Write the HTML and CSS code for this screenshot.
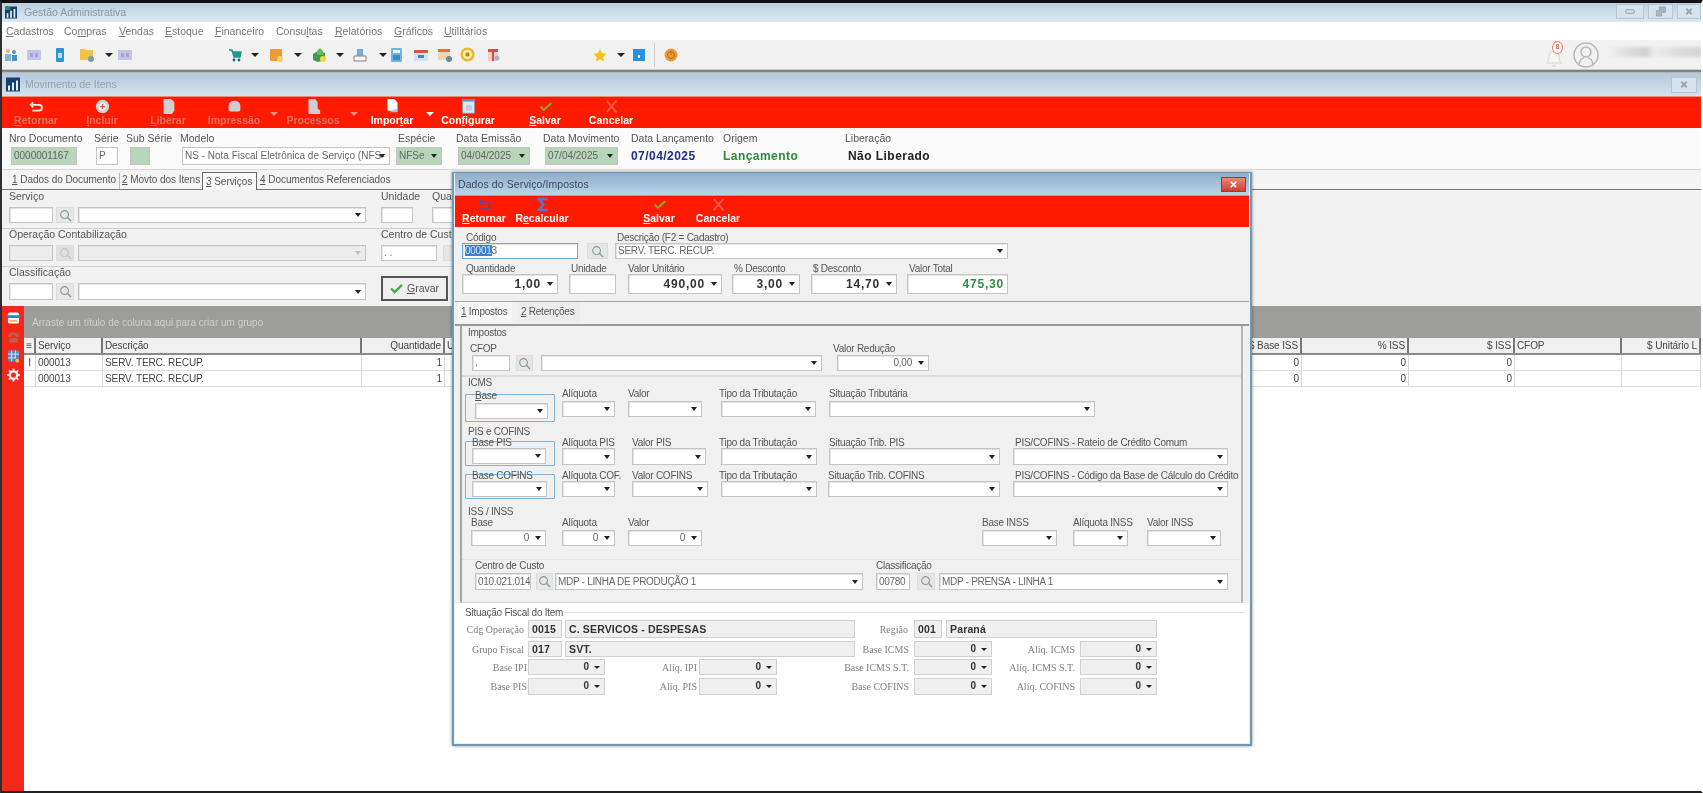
FILE: index.html
```html
<!DOCTYPE html>
<html lang="pt-BR">
<head>
<meta charset="utf-8">
<title>Gestão Administrativa</title>
<link rel="stylesheet" href="styles.css">
</head>
<body>
<div class="app">
  <header class="win-title">
    <svg class="logo" viewBox="0 0 14 14"><rect width="14" height="14" fill="#14406e"/><path d="M2 13V8h2v5zM6 13V5h2v8zM10 13V3h2v10z" fill="#e8f0f4"/><path d="M0 0h6v4H0z" fill="#2f8f5a"/></svg>
    <span class="win-name">Gestão Administrativa</span>
    <div class="win-btns">
      <span class="wb wb-min"><svg viewBox="0 0 14 8"><rect x="2" y="2" width="10" height="4" rx="1" fill="none" stroke="#8495a2"/></svg></span>
      <span class="wb wb-res"><svg viewBox="0 0 12 12"><path d="M1 5h6v6H1zM4 1h7v6H8V4H4z" fill="#a9b6c0" stroke="#8495a2" stroke-width=".6"/></svg></span>
      <span class="wb wb-cls"><svg viewBox="0 0 12 12"><path d="M3 3l6 6M9 3l-6 6" stroke="#95a4b0" stroke-width="2"/></svg></span>
    </div>
  </header>
  <nav class="menu">
    <span class="m-1"><u>C</u>adastros</span><span class="m-2">Co<u>m</u>pras</span><span class="m-3"><u>V</u>endas</span><span class="m-4"><u>E</u>stoque</span><span class="m-5"><u>F</u>inanceiro</span><span class="m-6">Consu<u>l</u>tas</span><span class="m-7"><u>R</u>elatórios</span><span class="m-8"><u>G</u>ráficos</span><span class="m-9"><u>U</u>tilitários</span>
  </nav>
  <div class="toolbar">
    <svg class="ti ml-2" viewBox="0 0 14 14"><circle cx="4" cy="3" r="2" fill="#e9b060"/><path d="M1 13V6h6v7z" fill="#7fb4dc"/><circle cx="10" cy="4" r="2" fill="#5c92c4"/><path d="M8 13V7h5v6z" fill="#4f8fbf"/></svg>
    <svg class="ti ml-9" viewBox="0 0 14 14"><rect y="2" width="14" height="10" rx="1" fill="#c5c3e8"/><path d="M3 5h3v4H3zM8 5h3v4H8z" fill="#a5a3d6"/></svg>
    <svg class="ti ml-12" viewBox="0 0 14 14"><rect x="3" width="8" height="14" rx="1" fill="#2c95d2"/><rect x="5" y="5" width="4" height="5" fill="#bfe2f5"/></svg>
    <svg class="ti ml-13" viewBox="0 0 14 14"><path d="M0 1h5l1 1h7v10H0z" fill="#f1c24a"/><circle cx="11" cy="11" r="3" fill="#7f98b0"/></svg>
    <i class="tc ml-11"></i>
    <svg class="ti ml-5" viewBox="0 0 14 14"><rect y="2" width="14" height="10" rx="1" fill="#c5c3e8"/><path d="M3 5h3v4H3zM8 5h3v4H8z" fill="#a5a3d6"/></svg>
    <svg class="ti ml-96" viewBox="0 0 14 14"><path d="M1 2h3l2 7h6l1-5H5" fill="#1f9a8c" stroke="#1f9a8c" stroke-width="1.4"/><circle cx="6" cy="12" r="1.4" fill="#167"/><circle cx="11" cy="12" r="1.4" fill="#167"/></svg>
    <i class="tc ml-9"></i>
    <svg class="ti ml-10" viewBox="0 0 14 14"><rect x="1" y="1" width="12" height="12" rx="1" fill="#ef9a3a"/><circle cx="11" cy="11" r="3" fill="#f4d35e"/></svg>
    <i class="tc ml-11"></i>
    <svg class="ti ml-10" viewBox="0 0 14 14"><path d="M1 6l5-3 7 2v7l-7 2-5-2z" fill="#3f9a4d"/><path d="M5 3l3-3 3 3v4H5z" fill="#6bb85a"/><circle cx="11" cy="11" r="3" fill="#f2d544"/></svg>
    <i class="tc ml-10"></i>
    <svg class="ti ml-9" viewBox="0 0 14 14"><path d="M4 1h6v6H4z" fill="#6fb1de"/><path d="M1 8h12v5H1z" fill="#f4f4f4" stroke="#667" stroke-width=".8"/><path d="M3 8l1-2h6l1 2z" fill="#99a"/></svg>
    <i class="tc ml-12"></i>
    <svg class="ti-n ml-4" viewBox="0 0 11 14"><rect width="11" height="14" rx="1" fill="#6fb3de"/><rect x="2" y="2" width="7" height="3" fill="#dff"/><rect x="2" y="7" width="7" height="5" fill="#3f8dbf"/></svg>
    <svg class="ti ml-12" viewBox="0 0 14 14"><rect y="2" width="14" height="11" fill="#cfe4f5"/><rect y="2" width="14" height="3" fill="#d9534a"/><rect x="4" y="7" width="6" height="3" fill="#4a7fc1"/></svg>
    <svg class="ti ml-10" viewBox="0 0 14 14"><rect y="1" width="12" height="11" fill="#f3d3b5"/><rect y="1" width="12" height="3" fill="#e0703c"/><circle cx="11" cy="11" r="3" fill="#66879e"/></svg>
    <svg class="ti-l ml-8" viewBox="0 0 16 16"><circle cx="8" cy="8" r="7.5" fill="#e8b62e"/><circle cx="8" cy="8" r="5" fill="#fbeeb7"/><rect x="6" y="6" width="4" height="4" fill="#b88616"/></svg>
    <svg class="ti ml-12" viewBox="0 0 14 14"><rect x="1" y="1" width="10" height="12" fill="#f2cdc8"/><path d="M1 1h10v3H1zM5 4h2v9H5z" fill="#c9524a"/><circle cx="10" cy="10" r="2.5" fill="#9ab" opacity=".8"/></svg>
    <svg class="ti ml-92" viewBox="0 0 14 14"><path d="M7 1l2 4.3 4.6.5-3.4 3.1 1 4.6L7 11.2 2.800 13.500l1-4.600L.4 5.800 5 5.300z" fill="#f5c21b"/></svg>
    <i class="tc ml-10"></i>
    <svg class="ti ml-7" viewBox="0 0 14 14"><rect width="12" height="12" y="1" x="1" fill="#2b90df"/><rect x="6" y="7" width="2" height="3" fill="#dff"/></svg>
    <span class="tsep"></span>
    <svg class="ti ml-9" viewBox="0 0 14 14"><circle cx="7" cy="7" r="6.500" fill="#ef9a3a"/><circle cx="7" cy="7" r="3.500" fill="none" stroke="#b86a10"/><path d="M7 3v4" stroke="#b86a10"/></svg>
    <div class="tb-right">
      <span class="bell"><svg viewBox="0 0 24 24"><path d="M12 6c-4 0-5 3-5 6 0 3-1 5-3 6h16c-2-1-3-3-3-6 0-3-1-6-5-6z" fill="#f4f4f4" stroke="#d8d8d8"/><path d="M10 20h4v2h-4z" fill="#ddd"/></svg><b class="badge">8</b></span>
      <svg class="user" viewBox="0 0 26 26"><circle cx="13" cy="13" r="12" fill="none" stroke="#b8b8b8" stroke-width="1.500"/><circle cx="13" cy="10" r="5" fill="none" stroke="#b8b8b8" stroke-width="1.500"/><path d="M6 22c1-4 3-6 5-6M20 22c-1-4-3-6-5-6" fill="none" stroke="#b8b8b8" stroke-width="1.500"/></svg>
      <span class="name-mask"></span>
    </div>
  </div>
  <div class="sep-dark"></div>

  <div class="child-title">
    <svg class="logo-c" viewBox="0 0 14 14"><rect width="14" height="14" fill="#14406e"/><path d="M2 13V8h2v5zM6 13V5h2v8zM10 13V3h2v10z" fill="#e8f0f4"/></svg>
    <span class="child-name">Movimento de Itens</span>
    <span class="wb wb-child"><svg viewBox="0 0 12 12"><path d="M3 3l6 6M9 3l-6 6" stroke="#95a4b0" stroke-width="2"/></svg></span>
  </div>

  <div class="redbar">
    <div class="rb off w-66"><svg class="ri" viewBox="0 0 18 18"><path d="M5 4l-3 3 3 3M2 7h10a3 3 0 0 1 0 7H4" fill="none" stroke="#fbe9e4" stroke-width="2.200"/></svg><span><u>R</u>etornar</span></div>
    <div class="rb off w-66"><svg class="ri" viewBox="0 0 18 18"><circle cx="9" cy="9" r="8" fill="#cfcfcf"/><circle cx="9" cy="9" r="5" fill="#ececec"/><path d="M9 6v6M6 9h6" stroke="#e35a45" stroke-width="1.500"/></svg><span><u>I</u>ncluir</span></div>
    <div class="rb off w-66"><svg class="ri" viewBox="0 0 18 18"><path d="M3 0h9l4 4v10l-3 4H3z" fill="#d0d0d0"/></svg><span><u>L</u>iberar</span></div>
    <div class="rb off w-66"><svg class="ri" viewBox="0 0 18 18"><path d="M2 8a7 6 0 0 1 14 0v5a2 2 0 0 1-2 2H4a2 2 0 0 1-2-2z" fill="#cfcfcf"/></svg><span>Impressão</span></div>
    <i class="rc dim w-14"></i>
    <div class="rb off w-64"><svg class="ri" viewBox="0 0 18 18"><path d="M3 0h8l3 4v7l3 3v4H3z" fill="#cdcdcd"/></svg><span>Processos</span></div>
    <i class="rc dim w-17"></i>
    <div class="rb w-60"><svg class="ri" viewBox="0 0 18 18"><path d="M3 0h8l4 4v10H3z" fill="#fff"/><path d="M5 16l10-5v5z" fill="#9dc4e4"/></svg><span>Impor<u>t</u>ar</span></div>
    <i class="rc w-16"></i>
    <div class="rb w-60"><svg class="ri" viewBox="0 0 18 18"><rect x="2" width="14" height="17" fill="#dbe7f3" stroke="#7fa0c0"/><rect x="2" width="14" height="3" fill="#5f8ebc"/><rect x="6" y="7" width="7" height="7" fill="#b8cfe4"/></svg><span>Con<u>f</u>igurar</span></div>
    <div class="rb w-74 ml-10"><svg class="ri" viewBox="0 0 18 18"><path d="M3 9l4 4 9-8" fill="none" stroke="#8fa62a" stroke-width="2.400"/></svg><span><u>S</u>alvar</span></div>
    <div class="rb w-58"><svg class="ri" viewBox="0 0 18 18"><path d="M3 2l12 14M15 2L3 16" stroke="#ee5c4a" stroke-width="2.200"/></svg><span>Cancelar</span></div>
  </div>

  <section class="docform">
    <div class="f w-66 ml-9"><span class="lb lo">Nro Documento</span><div class="in g-fill">0000001167</div></div>
    <div class="f w-22 ml-19"><span class="lb lo">Série</span><div class="in">P</div></div>
    <div class="f w-20 ml-12"><span class="lb lo2">Sub Série</span><div class="in g-fill"></div></div>
    <div class="f w-208 ml-32"><span class="lb lo">Modelo</span><div class="in sel">NS - Nota Fiscal Eletrônica de Serviço (NFS-</div></div>
    <div class="f w-46 ml-6"><span class="lb">Espécie</span><div class="in sel g-fill">NFSe</div></div>
    <div class="f w-72 ml-16"><span class="lb lo">Data Emissão</span><div class="in sel g-fill">04/04/2025</div></div>
    <div class="f w-73 ml-15"><span class="lb lo">Data Movimento</span><div class="in sel g-fill">07/04/2025</div></div>
    <div class="f w-92 ml-13"><span class="lb lz">Data Lançamento</span><b class="st st-blue">07/04/2025</b></div>
    <div class="f w-122"><span class="lb lz">Origem</span><b class="st st-green">Lançamento</b></div>
    <div class="f w-100"><span class="lb lz">Liberação</span><b class="st st-dark">Não Liberado</b></div>
  </section>

  <div class="tabs">
    <span class="tab tab-1"><u>1</u> Dados do Documento</span>
    <span class="tab tab-2"><u>2</u> Movto dos Itens</span>
    <span class="tab tab-on"><u>3</u> Serviços</span>
    <span class="tab tab-4"><u>4</u> Documentos Referenciados</span>
  </div>

  <section class="panel">
    <div class="prow prow-1">
      <div class="f w-44 ml-7"><span class="lb lz">Serviço</span><div class="in"></div></div>
      <span class="sb ml-3 w-18"><svg viewBox="0 0 14 14"><circle cx="6" cy="6" r="4.200" fill="none" stroke="#8a9aa0" stroke-width="1.200"/><path d="M9 9l4 4" stroke="#8a9aa0" stroke-width="1.500"/></svg></span>
      <div class="in sel w-288 ml-4"></div>
      <div class="f w-32 ml-15"><span class="lb lz">Unidade</span><div class="in"></div></div>
      <div class="f w-38 ml-19"><span class="lb lz">Quantidade</span><div class="in"></div></div>
    </div>
    <div class="prow prow-2">
      <div class="f w-44 ml-7"><span class="lb lz">Operação Contabilização</span><div class="in off-fill"></div></div>
      <span class="sb ml-3 w-18 sb-off"><svg viewBox="0 0 14 14"><circle cx="6" cy="6" r="4.200" fill="none" stroke="#c5c5c5" stroke-width="1.200"/><path d="M9 9l4 4" stroke="#c5c5c5" stroke-width="1.500"/></svg></span>
      <div class="in sel sel-off off-fill w-288 ml-4"></div>
      <div class="f w-56 ml-15"><span class="lb lz">Centro de Custo</span><div class="in"> .  .</div></div>
      <span class="sb ml-6 w-18"></span>
    </div>
    <div class="prow prow-3">
      <div class="f w-44 ml-7"><span class="lb lz">Classificação</span><div class="in"></div></div>
      <span class="sb ml-3 w-18"><svg viewBox="0 0 14 14"><circle cx="6" cy="6" r="4.200" fill="none" stroke="#8a9aa0" stroke-width="1.200"/><path d="M9 9l4 4" stroke="#8a9aa0" stroke-width="1.500"/></svg></span>
      <div class="in sel w-288 ml-4"></div>
      <div class="gravar ml-15"><svg viewBox="0 0 14 12"><path d="M1 6l4 4 8-8" fill="none" stroke="#3fb04a" stroke-width="2.500"/></svg><span><u>G</u>ravar</span></div>
    </div>
  </section>

  <section class="gridwrap">
    <aside class="side">
      <svg viewBox="0 0 14 14" class="si"><rect x="1" y="1" width="12" height="12" rx="2" fill="#fff"/><rect x="1" y="4" width="12" height="3" fill="#3c7fc0"/><rect x="3" y="9" width="8" height="2" fill="#f3b14a"/></svg>
      <svg viewBox="0 0 14 14" class="si"><path d="M1 5c3-4 9-4 12 0v2H9V5H5v2H1zM3 8h8l1 5H2z" fill="#c45a4e"/></svg>
      <svg viewBox="0 0 14 14" class="si"><path d="M1 1h12v9H9v3H1z" fill="#5d86c0"/><path d="M5 1v12M9 1v9M1 5h12M1 9h8" stroke="#dbe6f3"/><circle cx="11" cy="12" r="2" fill="#f3c34a"/></svg>
      <svg viewBox="0 0 14 14" class="si"><circle cx="7" cy="7" r="4" fill="none" stroke="#f0f0f0" stroke-width="2.500"/><path d="M7 0v3M7 11v3M0 7h3M11 7h3M2 2l2 2M10 10l2 2M12 2l-2 2M4 10l-2 2" stroke="#f0f0f0" stroke-width="2"/></svg>
    </aside>
    <div class="gridmain">
      <div class="groupband">Arraste um título de coluna aqui para criar um grupo</div>
      <div class="grow ghead">
        <span class="gi">≡</span><span>Serviço</span><span>Descrição</span><span class="r">Quantidade</span><span>U</span><span></span><span class="r">$ Base ISS</span><span class="r">% ISS</span><span class="r">$ ISS</span><span>CFOP</span><span class="r">$ Unitário L</span>
      </div>
      <div class="grow grow-d">
        <span class="gi">I</span><span>000013</span><span>SERV. TERC. RECUP.</span><span class="r">1</span><span></span><span></span><span class="r">0</span><span class="r">0</span><span class="r">0</span><span></span><span></span>
      </div>
      <div class="grow grow-d">
        <span class="gi"></span><span>000013</span><span>SERV. TERC. RECUP.</span><span class="r">1</span><span></span><span></span><span class="r">0</span><span class="r">0</span><span class="r">0</span><span></span><span></span>
      </div>
    </div>
  </section>

  <!-- Modal window -->
  <div class="modal">
    <div class="mtitle">
      <span>Dados do Serviço/Impostos</span>
      <span class="mclose"><svg viewBox="0 0 12 12"><path d="M3 3l6 6M9 3l-6 6" stroke="#fff" stroke-width="1.800"/></svg></span>
    </div>
    <div class="mred">
      <div class="rb w-54"><svg class="ri" viewBox="0 0 18 18"><path d="M6 3L3 6l3 3M3 6h11M15 8v5H4" fill="none" stroke="#3a55b5" stroke-width="2"/></svg><span><u>R</u>etornar</span></div>
      <div class="rb w-54 ml-4"><svg class="ri" viewBox="0 0 18 18"><path d="M3 1h12v3H8l4 5-4 5h7v3H3v-2l5-6-5-6z" fill="#5474cf"/></svg><span>R<u>e</u>calcular</span></div>
      <div class="rb w-48 ml-66"><svg class="ri" viewBox="0 0 18 18"><path d="M3 9l4 4 9-8" fill="none" stroke="#8fa62a" stroke-width="2.400"/></svg><span><u>S</u>alvar</span></div>
      <div class="rb w-52 ml-9"><svg class="ri" viewBox="0 0 18 18"><path d="M3 2l12 14M15 2L3 16" stroke="#ee5c4a" stroke-width="2.200"/></svg><span>Cancelar</span></div>
    </div>
    <div class="mhead">
      <div class="mrow-a">
        <div class="f w-116"><span class="lb li">Código</span><div class="in in-act"><mark>00001</mark>3</div></div>
        <span class="sb ml-9 w-21"><svg viewBox="0 0 14 14"><circle cx="6" cy="6" r="4.200" fill="none" stroke="#8a9aa0" stroke-width="1.200"/><path d="M9 9l4 4" stroke="#8a9aa0" stroke-width="1.500"/></svg></span>
        <div class="f w-393 ml-7"><span class="lb">Descrição (F2 = Cadastro)</span><div class="in sel">SERV. TERC. RECUP.</div></div>
      </div>
      <div class="mrow-b">
        <div class="f w-96"><span class="lb li">Quantidade</span><div class="in sel big num">1,00</div></div>
        <div class="f w-47 ml-11"><span class="lb">Unidade</span><div class="in big"></div></div>
        <div class="f w-94 ml-12"><span class="lb lz">Valor Unitário</span><div class="in sel big num">490,00</div></div>
        <div class="f w-68 ml-10"><span class="lb">% Desconto</span><div class="in sel big num">3,00</div></div>
        <div class="f w-86 ml-11"><span class="lb">$ Desconto</span><div class="in sel big num">14,70</div></div>
        <div class="f w-101 ml-10"><span class="lb">Valor Total</span><div class="in big num total">475,30</div></div>
      </div>
    </div>
    <div class="mtabs">
      <span class="mtab mtab-on"><u>1</u> Impostos</span>
      <span class="mtab"><u>2</u> Retenções</span>
    </div>
    <fieldset class="grp">
      <div class="heading h-imp">Impostos</div>
      <div class="band band-cfop">
        <div class="f w-38 ml-10"><span class="lb lo">CFOP</span><div class="in">.</div></div>
        <span class="sb ml-6 w-17"><svg viewBox="0 0 14 14"><circle cx="6" cy="6" r="4.200" fill="none" stroke="#8a9aa0" stroke-width="1.200"/><path d="M9 9l4 4" stroke="#8a9aa0" stroke-width="1.500"/></svg></span>
        <div class="in sel w-281 ml-8"></div>
        <div class="f w-92 ml-15"><span class="lb lo4">Valor Redução</span><div class="in sel num-s">0,00</div></div>
      </div>
      <div class="heading h-icms">ICMS</div>
      <div class="frow frow-icms">
        <div class="blue blue-icms"><span class="lb bl"><u>B</u>ase</span><div class="in sel w-73"></div></div>
        <div class="f w-53 ml-7"><span class="lb lz">Alíquota</span><div class="in sel"></div></div>
        <div class="f w-74 ml-13"><span class="lb lz">Valor</span><div class="in sel"></div></div>
        <div class="f w-95 ml-19"><span class="lb lo">Tipo da Tributação</span><div class="in sel"></div></div>
        <div class="f w-266 ml-13"><span class="lb lz">Situação Tributária</span><div class="in sel"></div></div>
      </div>
      <div class="heading h-pis">PIS e COFINS</div>
      <div class="frow frow-pis">
        <div class="blue"><span class="lb bl">Base PIS</span><div class="in sel w-74"></div></div>
        <div class="f w-53 ml-7"><span class="lb lz">Alíquota PIS</span><div class="in sel"></div></div>
        <div class="f w-74 ml-17"><span class="lb lz">Valor PIS</span><div class="in sel"></div></div>
        <div class="f w-96 ml-15"><span class="lb lo">Tipo da Tributação</span><div class="in sel"></div></div>
        <div class="f w-171 ml-12"><span class="lb lz">Situação Trib. PIS</span><div class="in sel"></div></div>
        <div class="f w-215 ml-13"><span class="lb">PIS/COFINS - Rateio de Crédito Comum</span><div class="in sel"></div></div>
      </div>
      <div class="frow frow-cof">
        <div class="blue"><span class="lb bl">Base COFINS</span><div class="in sel w-75"></div></div>
        <div class="f w-53 ml-7"><span class="lb lz">Alíquota COF.</span><div class="in sel"></div></div>
        <div class="f w-76 ml-17"><span class="lb lz">Valor COFINS</span><div class="in sel"></div></div>
        <div class="f w-96 ml-13"><span class="lb lo">Tipo da Tributação</span><div class="in sel"></div></div>
        <div class="f w-172 ml-11"><span class="lb lz">Situação Trib. COFINS</span><div class="in sel"></div></div>
        <div class="f w-215 ml-13"><span class="lb">PIS/COFINS - Código da Base de Cálculo do Crédito</span><div class="in sel"></div></div>
      </div>
      <div class="heading h-iss">ISS / INSS</div>
      <div class="frow frow-iss">
        <div class="f w-75 ml-9"><span class="lb lz">Base</span><div class="in sel num-s">0</div></div>
        <div class="f w-53 ml-16"><span class="lb lz">Alíquota</span><div class="in sel num-s">0</div></div>
        <div class="f w-74 ml-13"><span class="lb lz">Valor</span><div class="in sel num-s">0</div></div>
        <div class="f w-75 ml-280"><span class="lb lz">Base INSS</span><div class="in sel"></div></div>
        <div class="f w-55 ml-16"><span class="lb lz">Alíquota INSS</span><div class="in sel"></div></div>
        <div class="f w-74 ml-19"><span class="lb lz">Valor INSS</span><div class="in sel"></div></div>
      </div>
      <div class="frow frow-cc">
        <div class="f w-56 ml-13"><span class="lb lz">Centro de Custo</span><div class="in cc">010.021.014</div></div>
        <span class="sb ml-5 w-17 sb-cc"><svg viewBox="0 0 14 14"><circle cx="6" cy="6" r="4.200" fill="none" stroke="#8a9aa0" stroke-width="1.200"/><path d="M9 9l4 4" stroke="#8a9aa0" stroke-width="1.500"/></svg></span>
        <div class="in sel cc w-308 ml-2">MDP - LINHA DE PRODUÇÃO 1</div>
        <div class="f w-34 ml-13"><span class="lb lz">Classificação</span><div class="in cc">00780</div></div>
        <span class="sb ml-7 w-18 sb-cc"><svg viewBox="0 0 14 14"><circle cx="6" cy="6" r="4.200" fill="none" stroke="#8a9aa0" stroke-width="1.200"/><path d="M9 9l4 4" stroke="#8a9aa0" stroke-width="1.500"/></svg></span>
        <div class="in sel cc w-289 ml-4">MDP - PRENSA - LINHA 1</div>
      </div>
    </fieldset>
    <section class="fiscal">
      <div class="ftitle"><span>Situação Fiscal do Item</span></div>
      <div class="xrow x-a">
        <span class="xl w-69">Cdg Operação</span><span class="xb xv w-34 ml-4">0015</span><span class="xb xv w-290 ml-3">C. SERVICOS - DESPESAS</span>
        <span class="xl w-53">Região</span><span class="xb xv w-28 ml-6">001</span><span class="xb xv w-211 ml-4">Paraná</span>
      </div>
      <div class="xrow x-b">
        <span class="xl w-69">Grupo Fiscal</span><span class="xb xv w-34 ml-4">017</span><span class="xb xv w-290 ml-3">SVT.</span>
        <span class="xl w-54">Base ICMS</span><span class="xb xn w-78 ml-5">0</span>
        <span class="xl w-83">Alíq. ICMS</span><span class="xb xn w-77 ml-5">0</span>
      </div>
      <div class="xrow x-c">
        <span class="xl w-72">Base IPI</span><span class="xb xn w-77 ml-1">0</span>
        <span class="xl w-92">Alíq. IPI</span><span class="xb xn w-78 ml-2">0</span>
        <span class="xl w-132">Base ICMS S.T.</span><span class="xb xn w-78 ml-5">0</span>
        <span class="xl w-83">Alíq. ICMS S.T.</span><span class="xb xn w-77 ml-5">0</span>
      </div>
      <div class="xrow x-d">
        <span class="xl w-72">Base PIS</span><span class="xb xn w-77 ml-1">0</span>
        <span class="xl w-92">Alíq. PIS</span><span class="xb xn w-78 ml-2">0</span>
        <span class="xl w-132">Base COFINS</span><span class="xb xn w-78 ml-5">0</span>
        <span class="xl w-83">Alíq. COFINS</span><span class="xb xn w-77 ml-5">0</span>
      </div>
    </section>
  </div>
</div>
</body>
</html>
```
FILE: styles.css
```css
*{box-sizing:border-box}
html,body{margin:0;height:100%;overflow:hidden;background:#fff}
body{font:10.5px/11px "Liberation Sans",Arial,sans-serif;color:#444}
u{text-decoration:underline}
.app{position:relative;width:1703px;height:793px;display:flex;flex-direction:column;background:#fff;border-top:3px solid #111;border-left:2px solid #2a2f33;border-bottom:2px solid #222;border-right:2px solid #fff;filter:blur(.65px);overflow:hidden}

.ml-1{margin-left:1px}.ml-2{margin-left:2px}.ml-3{margin-left:3px}.ml-4{margin-left:4px}.ml-5{margin-left:5px}.ml-6{margin-left:6px}.ml-7{margin-left:7px}.ml-8{margin-left:8px}.ml-9{margin-left:9px}.ml-10{margin-left:10px}.ml-11{margin-left:11px}.ml-12{margin-left:12px}.ml-13{margin-left:13px}.ml-15{margin-left:15px}.ml-16{margin-left:16px}.ml-17{margin-left:17px}.ml-18{margin-left:18px}.ml-19{margin-left:19px}.ml-32{margin-left:32px}.ml-66{margin-left:66px}.ml-92{margin-left:92px}.ml-96{margin-left:96px}.ml-280{margin-left:280px}
.w-14{width:14px}.w-16{width:16px}.w-17{width:17px}.w-18{width:18px}.w-20{width:20px}.w-21{width:21px}.w-22{width:22px}.w-28{width:28px}.w-32{width:32px}.w-34{width:34px}.w-38{width:38px}.w-44{width:44px}.w-46{width:46px}.w-47{width:47px}.w-48{width:48px}.w-52{width:52px}.w-53{width:53px}.w-54{width:54px}.w-55{width:55px}.w-56{width:56px}.w-58{width:58px}.w-60{width:60px}.w-64{width:64px}.w-66{width:66px}.w-68{width:68px}.w-69{width:69px}.w-72{width:72px}.w-73{width:73px}.w-74{width:74px}.w-75{width:75px}.w-76{width:76px}.w-77{width:77px}.w-78{width:78px}.w-83{width:83px}.w-86{width:86px}.w-92{width:92px}.w-94{width:94px}.w-95{width:95px}.w-96{width:96px}.w-100{width:100px}.w-101{width:101px}.w-116{width:116px}.w-122{width:122px}.w-132{width:132px}.w-171{width:171px}.w-172{width:172px}.w-208{width:208px}.w-211{width:211px}.w-215{width:215px}.w-266{width:266px}.w-281{width:281px}.w-288{width:288px}.w-289{width:289px}.w-290{width:290px}.w-308{width:308px}.w-393{width:393px}

/* main window chrome */
.win-title{height:19px;flex:none;display:flex;align-items:center;background:linear-gradient(#bcd0e2,#dbe8f3);color:#8a98a5;padding-left:3px;font-size:10.5px}
.logo{width:12px;height:15px;flex:none}
.win-name{margin-left:7px}
.win-btns{margin-left:auto;display:flex;gap:4px;align-self:flex-start;margin-top:1px}
.wb{display:flex;align-items:center;justify-content:center;height:15px;border:1px solid #b4c6d4;background:#d6e3ee}
.wb svg{width:12px;height:11px}
.wb-min{width:28px}.wb-res{width:25px}.wb-cls{width:24px}
.menu{height:18px;flex:none;background:#fff;display:flex;align-items:center;color:#777;font-size:10.5px;white-space:nowrap}
.menu span{display:block}
.m-1{margin-left:4px;width:58px}.m-2{width:55px}.m-3{width:46px}.m-4{width:50px}.m-5{width:61px}.m-6{width:59px}.m-7{width:59px}.m-8{width:50px}
.toolbar{height:29px;flex:none;background:#f1f1f1;display:flex;align-items:center}
.ti{width:14px;height:14px;flex:none}
.ti-n{width:11px;height:14px;flex:none}
.ti-l{width:15px;height:15px;flex:none}
.tc{width:0;height:0;flex:none;border:4px solid transparent;border-top:4px solid #222;border-bottom:0}
.tsep{width:1px;height:24px;background:#cfcfcf;margin-left:8px;flex:none}
.tb-right{margin-left:auto;display:flex;align-items:center;height:100%}
.bell{position:relative;width:24px;height:24px;display:block;margin-top:5px}
.bell svg{width:24px;height:24px}
.badge{position:absolute;left:10px;top:-4px;width:11px;height:13px;border-radius:50%;border:1.5px solid #e27e6c;background:#fff;color:#d8604a;font-size:7px;line-height:10px;text-align:center;font-weight:700}
.user{width:26px;height:26px;margin-left:7px}
.name-mask{width:92px;height:10px;margin-left:10px;margin-top:-6px;background:linear-gradient(90deg,#efefef,#dedede 20%,#cfcfcf 40%,#ececec 50%,#dcdcdc 75%,#d4d4d4);filter:blur(1.500px)}
.sep-dark{height:4px;flex:none;background:linear-gradient(#f1f1f1,#777 40%,#8a8a8a 70%,#d8d8d8)}

.child-title{height:23px;flex:none;display:flex;align-items:center;background:linear-gradient(#b5c9dc,#d3e2ee);padding:0 4px;color:#96a4b0;font-size:10.5px}
.logo-c{width:14px;height:15px;flex:none}
.child-name{margin-left:5px}
.wb-child{margin-left:auto;width:26px;height:16px}

.redbar{height:32px;flex:none;background:#ff1a00;display:flex;align-items:stretch;padding-left:1px;border-top:1px solid #ef8a78}
.rb{display:flex;flex-direction:column;align-items:center;justify-content:flex-start;color:#fff;font-weight:700;font-size:10.5px;line-height:11px;letter-spacing:0;padding-top:2px;white-space:nowrap;flex:none}
.rb.off span{color:#dc7362}
.ri{width:15px;height:15px;flex:none;margin-bottom:1px}
.rc{flex:none;height:8px;align-self:flex-start;margin-top:15px;display:block;position:relative}
.rc::after{content:"";position:absolute;left:50%;margin-left:-4px;border:4px solid transparent;border-top:4px solid #fff;border-bottom:0}
.rc.dim::after{border-top-color:#e88b7c}

/* fields */
.f{display:flex;flex-direction:column;flex:none}
.lb{display:block;height:11px;line-height:11px;white-space:nowrap;color:#555;padding-left:2px}
.lz{padding-left:0}
.li{padding-left:4px}
.lo{margin-left:-2px;padding-left:0}
.lo2{margin-left:-4px;padding-left:0}
.lo4{margin-left:-4px;padding-left:0}
.in{height:16px;flex:none;position:relative;background:#fff;border:1px solid #c4c4c4;box-shadow:inset 1px 1px 0 #e4e4e4;font-size:10px;line-height:14px;color:#666;padding:0 2px;white-space:nowrap;overflow:hidden}
.sel{padding-right:14px}
.sel::after{content:"";position:absolute;right:4px;top:50%;margin-top:-2px;border:3.500px solid transparent;border-top:4px solid #222;border-bottom:0}
.sel-off::after{border-top-color:#bbb}
.g-fill{background:#b7d5b9}
.off-fill{background:#ececec}
.big{height:20px;line-height:18px}
.num{text-align:right;font-size:12px;font-weight:700;letter-spacing:.8px;color:#333}
.num.sel{padding-right:16px}
.num.total{color:#2f8f44;padding-right:3px;font-weight:700}
.num-s{text-align:right;padding-right:16px}
.sb{display:flex;align-items:center;justify-content:center;height:16px;flex:none;background:#e6e6e6;border:1px solid #dcdcdc;align-self:flex-end}
.sb svg{width:13px;height:13px}
.sb-off{background:#e0e0e0}

.docform{height:42px;flex:none;background:#fafafa;display:flex;align-items:flex-start;padding-top:5px;border-bottom:1px solid #d8d8d8}
.docform .in{margin-top:3px;height:18px;line-height:16px;box-shadow:none}
.st{display:block;font-size:12px;line-height:14px;margin-top:5px;letter-spacing:.45px;white-space:nowrap}
.st-blue{color:#1f2f8e}.st-green{color:#2b8a3a}.st-dark{color:#222;margin-left:3px}

.tabs{height:20px;flex:none;background:#f4f4f4;display:flex;align-items:flex-end;border-bottom:1px solid #777;padding-left:10px;color:#555;font-size:10px;letter-spacing:-.05px}
.tab{display:block;height:16px;line-height:14px;white-space:nowrap}
.tab-1{width:108px;border-right:1px solid #bbb;margin-right:2px}
.tab-2{width:78px;margin-right:2px}
.tab-on{width:55px;height:18px;line-height:17px;background:#f8f8f8;border:1px solid #666;border-bottom:0;margin-bottom:-1px;padding-left:3px;margin-right:3px}
.panel{height:116px;flex:none;background:#f1f1f1}
.prow{display:flex;align-items:flex-end;width:1200px;border-bottom:1px solid #cfcfcf}
.prow .f{gap:5px}
.prow-1{height:39px;padding-bottom:5px;padding-top:2px}
.prow-2{height:38px;padding-bottom:5px}
.prow-3{height:38px;padding-bottom:5px;border-bottom:0}
.prow-3 .sb,.prow-3 .in{height:17px}
.gravar{width:67px;height:25px;flex:none;border:2px solid #555;background:#efefef;display:flex;align-items:center;gap:4px;padding-left:7px;margin-bottom:-1px;color:#555}
.gravar svg{width:13px;height:11px;flex:none}

.gridwrap{flex:1;min-height:0;display:flex}
.side{width:22px;flex:none;background:#f4281a;display:flex;flex-direction:column;align-items:center;padding-top:5px;gap:5px}
.si{width:13px;height:14px;flex:none}
.gridmain{flex:1;min-width:0;background:#fff}
.groupband{height:32px;background:#9d9d9c;color:#cfcfcf;padding-left:8px;line-height:33px;font-size:10px}
.grow{display:grid;grid-template-columns:12px 67px 259px 83px 20px 775px 62px 107px 106px 107px 1fr;font-size:10px;letter-spacing:-.1px}
.grow span{display:block;overflow:hidden;white-space:nowrap;padding:0 2px}
.ghead{height:17px;background:#f0f0f0;line-height:15px;border-bottom:2px solid #8a8a8a}
.ghead span{border-right:2px solid #777}
.grow-d{height:16px;line-height:15px;border-bottom:1px solid #dcdcdc}
.grow-d span{border-right:1px solid #d8d8d8}
.r{text-align:right}
.grow .gi{text-align:center;padding:0}

/* modal */
.modal{position:absolute;left:450px;top:169px;width:800px;height:574px;background:#f0f0f0;border:2px solid #6d98b6;border-top-width:1px;padding:0 1px 1px;display:flex;flex-direction:column;box-shadow:0 0 3px rgba(0,0,0,.45);font-size:10px;letter-spacing:-.25px}
.mtitle{height:22px;flex:none;display:flex;align-items:center;background:linear-gradient(#8fadc9,#bad4ea);color:#3c4c5c;padding-left:3px;font-size:10.5px;letter-spacing:.1px}
.mclose{margin-left:auto;margin-right:3px;width:25px;height:15px;display:flex;align-items:center;justify-content:center;background:linear-gradient(#e9887a,#cf3e2e);border:1px solid #a33}
.mclose svg{width:11px;height:11px}
.mred{height:32px;flex:none;background:#ff1a00;display:flex;padding-left:2px;border-top:1px solid #e88}
.mred .rb{padding-top:1px}
.mhead{height:75px;flex:none;padding:5px 0 0 7px;border-bottom:1px solid #a5a5a5}
.mrow-a,.mrow-b{display:flex;align-items:flex-end}
.mrow-b{margin-top:4px}
.in-act{border-color:#6aa9d8}
mark{background:#3a7fd0;color:#cfe2ff}
.mtabs{height:24px;flex:none;display:flex;align-items:flex-start;padding-left:3px;color:#555;border-bottom:2px solid #9a9a9a}
.mtab{display:block;height:20px;line-height:19px;padding:0 6px 0 3px;white-space:nowrap;background:#ececec}
.mtab-on{width:54px;background:#f6f6f6;margin-right:6px}
.grp{margin:0 0 0 5px;padding:1px 0 0;width:783px;height:277px;flex:none;border:0;border-left:2px solid #a5a5a5;border-right:2px solid #b5b5b5;border-bottom:1px solid #d8d8d8;min-width:0}
.heading{height:11px;margin-left:6px;color:#555;white-space:nowrap}
.band{display:flex;align-items:flex-start}
.band-cfop{margin-top:5px;height:34px;border-bottom:2px solid #dcdcdc}
.band-cfop .f{gap:1px}
.band-cfop>.in,.band-cfop>.sb{margin-top:12px;align-self:flex-start}
.frow{display:flex;align-items:flex-start}
.blue{width:90px;height:25px;margin-left:3px;flex:none;border:1.500px solid #7fb4d8;margin-top:4px;padding-left:6px;border-radius:1px;background:#f0f0f0}
.bl{margin-top:-5px;padding-left:0;color:#555}
.frow-icms{height:34px}
.frow-icms .f .in{margin-top:2px}
.frow-icms .blue{height:28px;margin-top:6px;padding-left:9px}
.frow-icms .blue .in{margin-top:2px}
.h-pis{margin-top:4px}
.frow-pis{height:29px}
.frow-pis .f .in{height:17px}
.frow-cof{height:29px;margin-top:4px}
.h-iss{margin-top:7px}
.frow-iss{height:29px}
.frow-iss .f .in{margin-top:2px}
.frow-cc{margin-top:13px;align-items:flex-end;height:31px;border-top:1px solid #e4e4e4}
.frow-cc .f .in{margin-top:2px}
.in.cc{height:17px;line-height:15px;padding:0 1px 0 2px;letter-spacing:-.3px}
.sb-cc{height:17px}

.fiscal{flex:1;background:#fff;padding:4px 0 0;letter-spacing:0}
.ftitle{display:flex;align-items:center;height:11px;padding-left:10px;color:#555;letter-spacing:-.25px}
.ftitle::after{content:"";flex:1;height:1px;background:#dcdcdc;margin:0 4px 0 1px}
.xrow{display:flex;align-items:center}
.xl{display:block;flex:none;text-align:right;white-space:nowrap;color:#808080;font-family:"Liberation Serif",serif;font-size:10px}
.xb{display:block;flex:none;height:16px;line-height:14px;background:#efefef;border:1px solid #cfcfcf;white-space:nowrap;overflow:hidden}
.xv{font-weight:700;color:#333;padding-left:3px;font-size:10.5px;letter-spacing:.15px}
.xn{position:relative;text-align:right;font-weight:700;color:#333;padding-right:15px}
.xn::after{content:"";position:absolute;right:4px;top:6px;border:3.500px solid transparent;border-top:3px solid #222;border-bottom:0}
.x-a{margin-top:2px}.x-a .xb{height:18px;line-height:16px}
.x-b{margin-top:3px}
.x-c{margin-top:2px}
.x-d{margin-top:3px}
.x-d .xb{height:17px}
```
